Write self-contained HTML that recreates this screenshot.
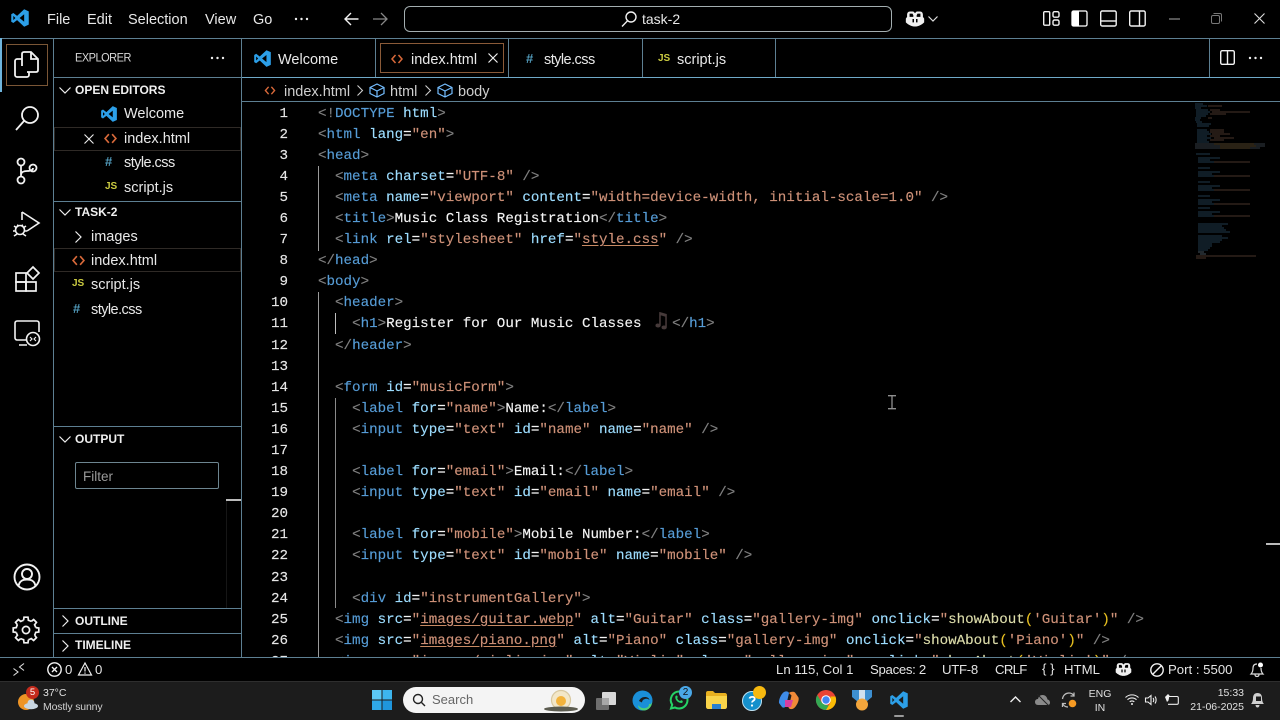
<!DOCTYPE html>
<html lang="en"><head><meta charset="utf-8"><title>index.html - task-2</title>
<style>
*{box-sizing:border-box}
html,body{margin:0;padding:0;width:1280px;height:720px;overflow:hidden;background:#000;color:#fff;font-family:"Liberation Sans",sans-serif}
.x{position:absolute;white-space:nowrap}
.u{font-size:14.5px;line-height:20px;color:#e8e8e8}
.n{letter-spacing:-.55px}
.b{font-size:12px;line-height:16px;font-weight:bold;color:#f0f0f0}
.l{position:absolute;background:#5d7f92}
svg{position:absolute;overflow:visible}
.w{fill:none;stroke:#f2f2f2;stroke-width:1.4}
#code,#nums{font-family:"Liberation Mono",monospace;font-size:14.2px;line-height:21.1px;white-space:pre;-webkit-text-stroke:.15px}
#code{position:absolute;left:318px;top:103.5px;width:880px;height:553.5px;overflow:hidden;color:#f4f4f4}
#nums{position:absolute;left:250px;top:103.5px;width:38px;height:553.5px;overflow:hidden;text-align:right;color:#e6e6e6}
.p{color:#808080}.t{color:#569cd6}.a{color:#9cdcfe}.s{color:#ce9178}.f{color:#dcdcaa}.y{color:#e8c020}
.k{text-decoration:underline;text-decoration-color:#c98a63;text-underline-offset:2px}
.st{font-size:13.2px;line-height:18px;color:#e4e4e4}
.tb{font-size:10.5px;line-height:14px;color:#e0e0e0}
</style></head><body>
<svg width="0" height="0" style="position:absolute"><defs>
<symbol id="vs" viewBox="0 0 24 24"><path fill="#2c9fe8" fill-rule="evenodd" d="M17 1.5 22.5 4v16L17 22.5 8.5 14.5 4 18 1.5 16.5v-9L4 6l4.500 3.500zM17 7.500 11.500 12 17 16.500zM4 9.500v5L6.500 12z"/></symbol>
<symbol id="code-i" viewBox="0 0 12 12"><path fill="none" stroke="#d9693a" stroke-width="1.5" d="M4.500 2 1 6l3.500 4M7.500 2 11 6l-3.500 4"/></symbol>
<symbol id="cop" viewBox="0 0 24 24"><path fill="#f0f0f0" d="M6 3h4l2 2 2-2h4c2.500 0 3.500 2 3.500 4v2.500l1.500 2V16c-3 3-7 5-11 5s-8-2-11-5v-4.500l1.500-2V7C2.500 5 3.500 3 6 3z"/><path fill="#000" d="M5.500 5.500h3.500l1 2v2H5.500zM14 7.500l1-2h3.500v4H14zM9 12h1.800v4H9zM13.200 12H15v4h-1.800z"/></symbol>
</defs></svg>

<!-- title bar -->
<svg style="left:10px;top:8px" width="20" height="20"><use href="#vs" width="20" height="20"/></svg>
<div class="x u" style="left:47px;top:10px">File</div>
<div class="x u" style="left:87px;top:10px">Edit</div>
<div class="x u" style="left:128px;top:10px">Selection</div>
<div class="x u" style="left:205px;top:10px">View</div>
<div class="x u" style="left:253px;top:10px">Go</div>
<svg style="left:294px;top:17px" width="16" height="4"><circle cx="2" cy="2" r="1.200" fill="#eee"/><circle cx="7.500" cy="2" r="1.200" fill="#eee"/><circle cx="13" cy="2" r="1.200" fill="#eee"/></svg>
<svg style="left:344px;top:12px" width="15" height="14"><path class="w" d="M14.500 7H1M7 1 1 7l6 6"/></svg>
<svg style="left:373px;top:12px" width="15" height="14"><path fill="none" stroke="#888" stroke-width="1.300" d="M0 7h13.500M8 1l6 6-6 6"/></svg>
<div class="x" style="left:404px;top:6px;width:488px;height:26px;border:1px solid #a3aeb0;border-radius:6px"></div>
<svg style="left:621px;top:11px" width="16" height="16"><circle class="w" cx="10" cy="6" r="5"/><path class="w" d="M6.500 9.800 1 15.500"/></svg>
<div class="x u" style="left:642px;top:9px;font-size:14px">task-2</div>
<svg style="left:905px;top:9px" width="20" height="20"><use href="#cop" width="20" height="20"/></svg>
<svg style="left:928px;top:16px" width="10" height="6"><path fill="none" stroke="#ddd" stroke-width="1.200" d="M.5.500 5 5 9.500.500"/></svg>
<svg style="left:1043px;top:10px" width="17" height="17"><rect class="w" x=".7" y="1.700" width="6" height="13.500" rx="1"/><rect class="w" x="10" y="1.700" width="6" height="5.500" rx="1.500"/><rect class="w" x="10" y="10" width="6" height="5.200" rx="1.500"/></svg>
<svg style="left:1071px;top:10px" width="17" height="17"><rect x="1" y="1" width="15" height="15" rx="1.500" fill="none" stroke="#fff" stroke-width="1.300"/><rect x="1" y="1" width="7" height="15" fill="#fff"/></svg>
<svg style="left:1100px;top:10px" width="17" height="17"><rect class="w" x=".7" y="1" width="15.500" height="15" rx="1.500"/><path class="w" d="M1 11h15"/></svg>
<svg style="left:1129px;top:10px" width="17" height="17"><rect class="w" x=".7" y="1" width="15.500" height="15" rx="1.500"/><path class="w" d="M10.500 1v15"/></svg>
<svg style="left:1169px;top:18px" width="11" height="2"><path stroke="#aaa" stroke-width="1" d="M0 1h11"/></svg>
<svg style="left:1211px;top:13px" width="11" height="11"><rect x=".5" y="2.500" width="8" height="8" rx="1.500" fill="none" stroke="#777"/><path fill="none" stroke="#777" d="M2.500 .5H9c1 0 1.500.5 1.500 1.500v6.500"/></svg>
<svg style="left:1254px;top:13px" width="11" height="11"><path fill="none" stroke="#ddd" stroke-width="1.100" d="M.5.500l10 10M10.500.500l-10 10"/></svg>

<!-- structure lines -->
<div class="l" style="left:0;top:38px;width:1280px;height:1px"></div>
<div class="l" style="left:53px;top:38px;width:1px;height:619px"></div>
<div class="l" style="left:241px;top:38px;width:1px;height:619px"></div>
<div class="l" style="left:53px;top:77px;width:188px;height:1px"></div>
<div class="l" style="left:242px;top:77px;width:1038px;height:1px;background:#6fa9c8"></div>
<div class="l" style="left:242px;top:101px;width:1038px;height:1px"></div>
<div class="l" style="left:375px;top:38px;width:1px;height:39px"></div>
<div class="l" style="left:508px;top:38px;width:1px;height:39px"></div>
<div class="l" style="left:642px;top:38px;width:1px;height:39px"></div>
<div class="l" style="left:775px;top:38px;width:1px;height:39px"></div>
<div class="l" style="left:1209px;top:38px;width:1px;height:39px"></div>

<!-- activity bar -->
<div class="x" style="left:0;top:38px;width:2px;height:54px;background:#6fb4dc"></div>
<div class="x" style="left:6px;top:44px;width:42px;height:42px;border:1px solid #7a5636"></div>
<svg style="left:14px;top:51px" width="26" height="28"><path class="w" style="stroke-width:1.800" d="M8 15V3c0-1 .5-2 2-2h7l7 7v11c0 1-.5 2-2 2h-9M17 1v7h7"/><path class="w" style="stroke-width:1.800" d="M8 8H3C2 8 1 9 1 10v14c0 1 1 2 2 2h10c1 0 2-1 2-2v-3"/></svg>
<svg style="left:15px;top:104px" width="26" height="28"><circle class="w" style="stroke-width:1.800" cx="15" cy="11" r="8"/><path class="w" style="stroke-width:1.800" d="M9 17 1 26"/></svg>
<svg style="left:16px;top:157px" width="22" height="28"><g class="w" style="stroke-width:1.800"><circle cx="5" cy="5" r="3.500"/><circle cx="5" cy="23" r="3.500"/><circle cx="17" cy="11" r="3.500"/><path d="M5 8.500v11M5 18c0-3 3-4 6-4 3 0 6-.5 6-3"/></g></svg>
<svg style="left:13px;top:211px" width="28" height="30"><g class="w" style="stroke-width:1.600"><path d="M9 1l17 11-12 8"/><path d="M9 1v8"/><circle cx="7" cy="19" r="4.500"/><path d="M1 15l3 2M13 15l-3 2M0 20h3M11 20h3M1 25l3-2M13 25l-3-2M4 14l2 1M10 14l-2 1"/></g></svg>
<svg style="left:15px;top:266px" width="26" height="26"><g class="w" style="stroke-width:1.700"><rect x="1" y="7" width="10" height="9"/><rect x="1" y="16" width="10" height="9"/><rect x="11" y="16" width="10" height="9"/><path d="M18 1l6 6-6 6-6-6z"/></g></svg>
<svg style="left:14px;top:320px" width="27" height="28"><g class="w" style="stroke-width:1.600"><path d="M12 20H3c-1 0-2-1-2-2V3c0-1 1-2 2-2h20c1 0 2 1 2 2v9M5 25h8"/><circle cx="19" cy="19" r="6.500" fill="#000"/><path d="M16 17l2 2-2 2M22 17l-2 2 2 2" stroke-width="1.100"/></g></svg>
<svg style="left:13px;top:563px" width="28" height="28"><g class="w" style="stroke-width:1.900"><circle cx="14" cy="14" r="12.500"/><circle cx="14" cy="11" r="5"/><path d="M5.500 23c1-5 4-6.500 8.500-6.500s7.500 1.500 8.500 6.500"/></g></svg>
<svg style="left:13px;top:617px" width="26" height="26"><g class="w" style="stroke-width:1.700" transform="translate(13 13)"><circle r="3.600"/>
<path d="M-2.400 -9.700L-2 -12.800L2 -12.800L2.400 -9.700A10 10 0 0 1 5.150 -8.570"/>
<path transform="rotate(45)" d="M-2.400 -9.700L-2 -12.800L2 -12.800L2.400 -9.700A10 10 0 0 1 5.150 -8.570"/>
<path transform="rotate(90)" d="M-2.400 -9.700L-2 -12.800L2 -12.800L2.400 -9.700A10 10 0 0 1 5.150 -8.570"/>
<path transform="rotate(135)" d="M-2.400 -9.700L-2 -12.800L2 -12.800L2.400 -9.700A10 10 0 0 1 5.150 -8.570"/>
<path transform="rotate(180)" d="M-2.400 -9.700L-2 -12.800L2 -12.800L2.400 -9.700A10 10 0 0 1 5.150 -8.570"/>
<path transform="rotate(225)" d="M-2.400 -9.700L-2 -12.800L2 -12.800L2.400 -9.700A10 10 0 0 1 5.150 -8.570"/>
<path transform="rotate(270)" d="M-2.400 -9.700L-2 -12.800L2 -12.800L2.400 -9.700A10 10 0 0 1 5.150 -8.570"/>
<path transform="rotate(315)" d="M-2.400 -9.700L-2 -12.800L2 -12.800L2.400 -9.700A10 10 0 0 1 5.150 -8.570"/>
</g></svg>

<!-- sidebar -->
<div class="x" style="left:75px;top:51px;font-size:11px;letter-spacing:-.5px;line-height:15px;color:#d8d8d8;transform-origin:0 50%;transform:scaleY(1.1)">EXPLORER</div>
<svg style="left:210px;top:56px" width="15" height="4"><circle cx="2" cy="2" r="1.200" fill="#eee"/><circle cx="7.500" cy="2" r="1.200" fill="#eee"/><circle cx="13" cy="2" r="1.200" fill="#eee"/></svg>
<svg style="left:59px;top:87px" width="12" height="7"><path fill="none" stroke="#eee" stroke-width="1.200" d="M.5.500 6 6 11.500.500"/></svg>
<div class="x b" style="left:75px;top:82px">OPEN EDITORS</div>
<svg style="left:100px;top:105px" width="18" height="18"><use href="#vs" width="18" height="18"/></svg>
<div class="x u" style="left:124px;top:104px">Welcome</div>
<div class="x" style="left:54px;top:127px;width:187px;height:24px;border:1px solid #2f2a26"></div>
<svg style="left:84px;top:134px" width="10" height="10"><path fill="none" stroke="#eee" stroke-width="1.100" d="M.5.500l9 9M9.500.500l-9 9"/></svg>
<svg style="left:104px;top:132px" width="13" height="13"><use href="#code-i" width="13" height="13"/></svg>
<div class="x u" style="left:124px;top:129px">index.html</div>
<div class="x" style="left:105px;top:153px;font-size:13px;line-height:18px;font-weight:bold;color:#519aba">#</div>
<div class="x u n" style="left:124px;top:153px">style.css</div>
<div class="x" style="left:105px;top:180px;font-size:10px;line-height:14px;font-weight:bold;color:#cbcb41">JS</div>
<div class="x u" style="left:124px;top:178px">script.js</div>
<div class="l" style="left:54px;top:201px;width:187px;height:1px"></div>
<svg style="left:59px;top:209px" width="12" height="7"><path fill="none" stroke="#eee" stroke-width="1.200" d="M.5.500 6 6 11.500.500"/></svg>
<div class="x b" style="left:75px;top:204px">TASK-2</div>
<svg style="left:75px;top:231px" width="7" height="12"><path fill="none" stroke="#eee" stroke-width="1.200" d="M.5.500 6 6 .5 11.500"/></svg>
<div class="x u" style="left:91px;top:227px">images</div>
<div class="x" style="left:54px;top:248px;width:187px;height:24px;border:1px solid #2f2a26"></div>
<svg style="left:72px;top:254px" width="13" height="13"><use href="#code-i" width="13" height="13"/></svg>
<div class="x u" style="left:91px;top:251px">index.html</div>
<div class="x" style="left:72px;top:277px;font-size:10px;line-height:14px;font-weight:bold;color:#cbcb41">JS</div>
<div class="x u" style="left:91px;top:275px">script.js</div>
<div class="x" style="left:73px;top:300px;font-size:13px;line-height:18px;font-weight:bold;color:#519aba">#</div>
<div class="x u n" style="left:91px;top:300px">style.css</div>
<div class="l" style="left:54px;top:426px;width:187px;height:1px"></div>
<svg style="left:59px;top:436px" width="12" height="7"><path fill="none" stroke="#eee" stroke-width="1.200" d="M.5.500 6 6 11.500.500"/></svg>
<div class="x b" style="left:75px;top:431px">OUTPUT</div>
<div class="x" style="left:75px;top:462px;width:144px;height:27px;border:1px solid #6d8590;border-radius:2px;padding-left:7px;font-size:13.500px;line-height:28px;color:#9a9a9a">Filter</div>
<div class="x" style="left:226px;top:499px;width:15px;height:2px;background:#bbb"></div>
<div class="x" style="left:226px;top:501px;width:1px;height:107px;background:#161616"></div>
<div class="l" style="left:54px;top:608px;width:187px;height:1px"></div>
<svg style="left:62px;top:615px" width="7" height="12"><path fill="none" stroke="#eee" stroke-width="1.200" d="M.5.500 6 6 .5 11.500"/></svg>
<div class="x b" style="left:75px;top:613px">OUTLINE</div>
<div class="l" style="left:54px;top:633px;width:187px;height:1px"></div>
<svg style="left:62px;top:640px" width="7" height="12"><path fill="none" stroke="#eee" stroke-width="1.200" d="M.5.500 6 6 .5 11.500"/></svg>
<div class="x b" style="left:75px;top:637px">TIMELINE</div>

<!-- tabs -->
<svg style="left:253px;top:49px" width="19" height="19"><use href="#vs" width="19" height="19"/></svg>
<div class="x u" style="left:278px;top:50px">Welcome</div>
<div class="x" style="left:380px;top:43px;width:124px;height:30px;border:1px solid #8a5a38"></div>
<svg style="left:391px;top:53px" width="12" height="12"><use href="#code-i" width="12" height="12"/></svg>
<div class="x u" style="left:411px;top:50px">index.html</div>
<svg style="left:488px;top:53px" width="10" height="10"><path fill="none" stroke="#eee" stroke-width="1.200" d="M.5.500l9 9M9.500.500l-9 9"/></svg>
<div class="x" style="left:526px;top:50px;font-size:13px;line-height:18px;font-weight:bold;color:#519aba">#</div>
<div class="x u n" style="left:544px;top:50px">style.css</div>
<div class="x" style="left:658px;top:52px;font-size:10px;line-height:14px;font-weight:bold;color:#cbcb41">JS</div>
<div class="x u" style="left:677px;top:50px">script.js</div>
<svg style="left:1220px;top:50px" width="15" height="15"><rect class="w" x=".7" y=".7" width="13.600" height="13.600" rx="1.500"/><path class="w" d="M7.500 1v13"/></svg>
<svg style="left:1248px;top:56px" width="15" height="4"><circle cx="2" cy="2" r="1.200" fill="#eee"/><circle cx="7.500" cy="2" r="1.200" fill="#eee"/><circle cx="13" cy="2" r="1.200" fill="#eee"/></svg>

<!-- breadcrumbs -->
<svg style="left:264px;top:85px" width="12" height="11"><use href="#code-i" width="12" height="11"/></svg>
<div class="x u" style="left:284px;top:82px;color:#cfcfcf">index.html</div>
<svg style="left:357px;top:85px" width="6" height="11"><path fill="none" stroke="#ccc" stroke-width="1.100" d="M.5.500 5.500 5.500.5 10.500"/></svg>
<svg style="left:369px;top:83px" width="16" height="15"><path fill="none" stroke="#75beff" stroke-width="1.200" d="M8 1l7 3.500v6L8 14l-7-3.500v-6zM1 4.500 8 8l7-3.500M8 8v6"/></svg>
<div class="x u" style="left:390px;top:82px;color:#cfcfcf">html</div>
<svg style="left:425px;top:85px" width="6" height="11"><path fill="none" stroke="#ccc" stroke-width="1.100" d="M.5.500 5.500 5.500.5 10.500"/></svg>
<svg style="left:437px;top:83px" width="16" height="15"><path fill="none" stroke="#75beff" stroke-width="1.200" d="M8 1l7 3.500v6L8 14l-7-3.500v-6zM1 4.500 8 8l7-3.500M8 8v6"/></svg>
<div class="x u" style="left:458px;top:82px;color:#cfcfcf">body</div>

<!-- editor -->
<div id="nums">1
2
3
4
5
6
7
8
9
10
11
12
13
14
15
16
17
18
19
20
21
22
23
24
25
26
27</div>
<div id="code"><span class="p">&lt;!</span><span class="t">DOCTYPE</span> <span class="a">html</span><span class="p">&gt;</span>
<span class="p">&lt;</span><span class="t">html</span> <span class="a">lang</span>=<span class="s">"en"</span><span class="p">&gt;</span>
<span class="p">&lt;</span><span class="t">head</span><span class="p">&gt;</span>
  <span class="p">&lt;</span><span class="t">meta</span> <span class="a">charset</span>=<span class="s">"UTF-8"</span> <span class="p">/&gt;</span>
  <span class="p">&lt;</span><span class="t">meta</span> <span class="a">name</span>=<span class="s">"viewport"</span> <span class="a">content</span>=<span class="s">"width=device-width, initial-scale=1.0"</span> <span class="p">/&gt;</span>
  <span class="p">&lt;</span><span class="t">title</span><span class="p">&gt;</span>Music Class Registration<span class="p">&lt;/</span><span class="t">title</span><span class="p">&gt;</span>
  <span class="p">&lt;</span><span class="t">link</span> <span class="a">rel</span>=<span class="s">"stylesheet"</span> <span class="a">href</span>=<span class="s">"<span class="k">style.css</span>"</span> <span class="p">/&gt;</span>
<span class="p">&lt;/</span><span class="t">head</span><span class="p">&gt;</span>
<span class="p">&lt;</span><span class="t">body</span><span class="p">&gt;</span>
  <span class="p">&lt;</span><span class="t">header</span><span class="p">&gt;</span>
    <span class="p">&lt;</span><span class="t">h1</span><span class="p">&gt;</span>Register for Our Music Classes <span style="color:#463a3a;font-family:'DejaVu Sans',sans-serif;display:inline-block;width:22px;padding-left:2px;font-size:20px;font-weight:bold;line-height:0;vertical-align:baseline;-webkit-text-stroke:.8px #463a3a">♫</span><span class="p">&lt;/</span><span class="t">h1</span><span class="p">&gt;</span>
  <span class="p">&lt;/</span><span class="t">header</span><span class="p">&gt;</span>

  <span class="p">&lt;</span><span class="t">form</span> <span class="a">id</span>=<span class="s">"musicForm"</span><span class="p">&gt;</span>
    <span class="p">&lt;</span><span class="t">label</span> <span class="a">for</span>=<span class="s">"name"</span><span class="p">&gt;</span>Name:<span class="p">&lt;/</span><span class="t">label</span><span class="p">&gt;</span>
    <span class="p">&lt;</span><span class="t">input</span> <span class="a">type</span>=<span class="s">"text"</span> <span class="a">id</span>=<span class="s">"name"</span> <span class="a">name</span>=<span class="s">"name"</span> <span class="p">/&gt;</span>

    <span class="p">&lt;</span><span class="t">label</span> <span class="a">for</span>=<span class="s">"email"</span><span class="p">&gt;</span>Email:<span class="p">&lt;/</span><span class="t">label</span><span class="p">&gt;</span>
    <span class="p">&lt;</span><span class="t">input</span> <span class="a">type</span>=<span class="s">"text"</span> <span class="a">id</span>=<span class="s">"email"</span> <span class="a">name</span>=<span class="s">"email"</span> <span class="p">/&gt;</span>

    <span class="p">&lt;</span><span class="t">label</span> <span class="a">for</span>=<span class="s">"mobile"</span><span class="p">&gt;</span>Mobile Number:<span class="p">&lt;/</span><span class="t">label</span><span class="p">&gt;</span>
    <span class="p">&lt;</span><span class="t">input</span> <span class="a">type</span>=<span class="s">"text"</span> <span class="a">id</span>=<span class="s">"mobile"</span> <span class="a">name</span>=<span class="s">"mobile"</span> <span class="p">/&gt;</span>

    <span class="p">&lt;</span><span class="t">div</span> <span class="a">id</span>=<span class="s">"instrumentGallery"</span><span class="p">&gt;</span>
  <span class="p">&lt;</span><span class="t">img</span> <span class="a">src</span>=<span class="s">"<span class="k">images/guitar.webp</span>"</span> <span class="a">alt</span>=<span class="s">"Guitar"</span> <span class="a">class</span>=<span class="s">"gallery-img"</span> <span class="a">onclick</span>=<span class="s">"</span><span class="f">showAbout</span><span class="y">(</span><span class="s">'Guitar'</span><span class="y">)</span><span class="s">"</span> <span class="p">/&gt;</span>
  <span class="p">&lt;</span><span class="t">img</span> <span class="a">src</span>=<span class="s">"<span class="k">images/piano.png</span>"</span> <span class="a">alt</span>=<span class="s">"Piano"</span> <span class="a">class</span>=<span class="s">"gallery-img"</span> <span class="a">onclick</span>=<span class="s">"</span><span class="f">showAbout</span><span class="y">(</span><span class="s">'Piano'</span><span class="y">)</span><span class="s">"</span> <span class="p">/&gt;</span>
  <span class="p">&lt;</span><span class="t">img</span> <span class="a">src</span>=<span class="s">"<span class="k">images/violin.jpg</span>"</span> <span class="a">alt</span>=<span class="s">"Violin"</span> <span class="a">class</span>=<span class="s">"gallery-img"</span> <span class="a">onclick</span>=<span class="s">"</span><span class="f">showAbout</span><span class="y">(</span><span class="s">'Violin'</span><span class="y">)</span><span class="s">"</span> <span class="p">/&gt;</span></div>
<!-- indent guides -->
<div class="x" style="left:318px;top:166px;width:1px;height:85px;background:#9a9a9a"></div>
<div class="x" style="left:318px;top:292px;width:1px;height:365px;background:#9a9a9a"></div>
<div class="x" style="left:335px;top:313px;width:1px;height:21px;background:#bdbdbd"></div>
<div class="x" style="left:335px;top:398px;width:1px;height:210px;background:#8a8a8a"></div>
<!-- i-beam cursor -->
<svg style="left:887px;top:395px" width="10" height="15"><path fill="none" stroke="#8f8f8f" stroke-width="1.300" d="M1 .7h8M5 .7v13M1 13.700h8"/></svg>
<!-- minimap -->
<svg style="left:1190px;top:102px" width="90" height="160"><g stroke-width="1" fill="none" opacity=".55">
<path stroke="#3a6a8c" d="M5 2h8M5 4h12M5 6h6M6 8h12M6 10h14M6 12h12M6 14h10M5 16h6M5 18h5M6 20h6M7 22h14M7 24h12M7 28h10M7 30h12M7 32h14M7 34h10M7 36h14M7 38h10M7 40h12"/>
<path stroke="#86604e" d="M18 4h14M20 8h10M22 10h38M20 12h16M18 16h4M20 28h14M20 30h14M22 32h18M20 34h10M24 36h20M20 38h14"/>
<path stroke="#5f6f7c" d="M5 42h70M5 44h70M5 46h65"/><path stroke="#9a7a4e" d="M24 42h40M30 44h36M30 46h30"/>
<path stroke="#3a6a8c" d="M6 52h14M8 56h22M8 58h12M8 60h50M8 66h12M8 70h22M8 72h14M8 74h50M8 80h12M8 84h22M8 86h14M8 88h50M8 94h12M8 98h22M8 100h14M8 102h50M8 106h12M8 110h22M8 112h14M8 114h50"/>
<path stroke="#86604e" d="M24 60h36M24 74h36M24 88h36M24 102h36M24 114h36"/>
<path stroke="#3a6a8c" d="M8 122h30M8 124h24M8 126h26M8 128h28M8 130h32M8 134h24M8 136h30M8 138h24M8 140h22M8 142h14M8 144h14M8 146h12M8 148h10"/>
<path stroke="#7c96a8" d="M8 150h6M10 152h6"/>
<path stroke="#86604e" d="M6 154h60M6 156h10"/></g></svg>
<div class="x" style="left:1266px;top:543px;width:14px;height:1.500px;background:#bbb"></div>

<!-- status bar -->
<div class="l" style="left:0;top:657px;width:1280px;height:1px"></div>
<svg style="left:13px;top:663px" width="12" height="13"><path fill="none" stroke="#ddd" stroke-width="1.100" d="M.5 5.500 5 9 .5 12.500M11 .5 6.500 4 11 7.500"/></svg>
<svg style="left:47px;top:662px" width="15" height="15"><circle class="w" cx="7.500" cy="7.500" r="6.700"/><path class="w" d="M5 5l5 5M10 5l-5 5"/></svg>
<div class="x st" style="left:65px;top:661px">0</div>
<svg style="left:78px;top:662px" width="14" height="14"><path fill="none" stroke="#f0f0f0" stroke-width="1.200" d="M7 1 13.500 13H.5zM7 5v4.500M7 10.500v1.300"/></svg>
<div class="x st" style="left:95px;top:661px">0</div>
<div class="x st" style="left:776px;top:661px">Ln 115, Col 1</div>
<div class="x st" style="left:870px;top:661px;letter-spacing:-.3px">Spaces: 2</div>
<div class="x st" style="left:942px;top:661px;letter-spacing:-.3px">UTF-8</div>
<div class="x st" style="left:995px;top:661px;letter-spacing:-.7px">CRLF</div>
<div class="x st" style="left:1042px;top:660px">{ }</div>
<div class="x st" style="left:1064px;top:661px">HTML</div>
<svg style="left:1115px;top:661px" width="17" height="17"><use href="#cop" width="17" height="17"/></svg>
<svg style="left:1150px;top:663px" width="14" height="14"><circle class="w" cx="7" cy="7" r="6.200"/><path class="w" d="M11.500 2.500l-9 9"/></svg>
<div class="x st" style="left:1168px;top:661px">Port : 5500</div>
<svg style="left:1250px;top:662px" width="14" height="15"><path fill="none" stroke="#ddd" stroke-width="1.200" d="M7 2C4 2 3 4 3 6c0 3-1 5-2 6h12c-1-1-2-3-2-6M5 12.500c0 1.500 1 2 2 2s2-.5 2-2"/><circle cx="10.500" cy="3" r="2.500" fill="#fff"/></svg>

<!-- taskbar -->
<div class="x" style="left:0;top:681px;width:1280px;height:39px;background:#1c1c1c;border-top:1px solid #2e2e2e"></div>
<svg style="left:17px;top:688px" width="24" height="24"><circle cx="9" cy="14" r="8" fill="#ee9425"/><ellipse cx="14" cy="18" rx="7" ry="3.200" fill="#c8d6e2"/><circle cx="14" cy="15" r="3.500" fill="#c8d6e2"/></svg>
<div class="x" style="left:26px;top:686px;width:13px;height:13px;border-radius:50%;background:#c42b1c;font-size:9.500px;line-height:13px;text-align:center;color:#fff">5</div>
<div class="x tb" style="left:43px;top:686px">37°C</div>
<div class="x tb" style="left:43px;top:700px;color:#cfcfcf;letter-spacing:-.15px">Mostly sunny</div>
<svg style="left:372px;top:690px" width="20" height="20"><path fill="#5cc8f5" d="M0 0h9.500v9.500H0z"/><path fill="#3db5ee" d="M10.500 0H20v9.500h-9.500z"/><path fill="#2fa8e8" d="M0 10.500h9.500V20H0z"/><path fill="#1f96dc" d="M10.500 10.500H20V20h-9.500z"/></svg>
<div class="x" style="left:403px;top:687px;width:182px;height:26px;border-radius:13px;background:#f4f4f4"></div>
<svg style="left:412px;top:693px" width="14" height="14"><circle cx="6" cy="6" r="4.500" fill="none" stroke="#222" stroke-width="1.400"/><path stroke="#222" stroke-width="1.400" d="M9.500 9.500l3.500 3.500"/></svg>
<div class="x" style="left:432px;top:692px;font-size:13px;line-height:16px;color:#666">Search</div>
<svg style="left:543px;top:689px" width="40" height="23"><circle cx="18" cy="11" r="9.500" fill="#f3e7c8" stroke="#d8c8a0" stroke-width="1.200"/><circle cx="18" cy="12" r="5" fill="#f3b33c"/><ellipse cx="18" cy="20" rx="17" ry="2.500" fill="#5c5c50"/></svg>
<svg style="left:596px;top:691px" width="20" height="19"><rect x="0" y="7" width="13" height="12" rx="1" fill="#6e6e6e"/><rect x="6" y="1" width="14" height="13" rx="1" fill="#d8d8d8"/><rect x="6" y="7" width="7" height="7" fill="#a8a8a8"/></svg>
<svg style="left:632px;top:690px" width="21" height="21"><circle cx="10.500" cy="10.500" r="10" fill="#1a8fd8"/><path fill="#4ccf7a" d="M20 12c0 5-4 8.500-8 8.500-4 0-6-3-6-5.500 2 3 6 4 9 2.500 1.500-.8 2-2 2-3.500h2z"/><path fill="#1c1c1c" d="M7 11c1-2.500 3-4 6-4 2.500 0 4 1.200 4.500 3-1-1-2.500-1.500-4.500-1-2 .5-3 2-3 3.500z"/></svg>
<svg style="left:669px;top:689px" width="24" height="22"><path fill="none" stroke="#25d366" stroke-width="2" d="M10 2.500a8.500 8.500 0 0 1 0 17c-1.500 0-3-.4-4-1l-4 1 1.200-3.800A8.500 8.500 0 0 1 10 2.500z"/><path fill="#25d366" d="M6.500 7c1-1 2-.5 2.200 1l-.5 1.200c.5 1.300 1.500 2.300 2.800 2.800l1.200-.8c1.300.3 2 1 1.300 2.300-2 1.800-8.500-2-7-6.500z"/></svg>
<div class="x" style="left:679px;top:686px;width:13px;height:13px;border-radius:50%;background:#4aa8e8;font-size:10px;line-height:13px;text-align:center;color:#111">2</div>
<svg style="left:706px;top:691px" width="21" height="18"><path fill="#e8b020" d="M0 2c0-1 .5-2 2-2h5l2 2h10c1 0 2 1 2 2v2H0z"/><path fill="#f9d44a" d="M0 5h21v11c0 1-1 2-2 2H2c-1 0-2-1-2-2z"/><rect x="6" y="13" width="9" height="5" fill="#2a7fd0"/></svg>
<svg style="left:742px;top:690px" width="20" height="21"><circle cx="10" cy="11" r="9.500" fill="#1590cc" stroke="#bfe4f5" stroke-width="1"/><path fill="none" stroke="#fff" stroke-width="1.800" d="M7.500 8.500c.5-2 5-2.500 5.200.3.100 2-2.700 1.900-2.700 3.700"/><circle cx="10" cy="15.500" r="1.100" fill="#fff"/></svg>
<div class="x" style="left:753px;top:686px;width:13px;height:13px;border-radius:50%;background:#f7b90f"></div>
<svg style="left:779px;top:691px" width="20" height="19"><path fill="#3f8ce8" d="M5 1c2-1 4-1 5 1l-3 13c-1 2-3 2-4 1L0 12C-.5 9 2 3 5 1z"/><path fill="#f08a38" d="M10 2c1-1 4-2 6-.5l3.500 5c1 3-2 9-5 11-2 1-4 1-5-1l3-12z"/><path fill="#d93ea0" d="M6 9h8l-2 7H6z"/></svg>
<svg style="left:816px;top:690px" width="20" height="20"><circle cx="10" cy="10" r="10" fill="#ea4335"/><path fill="#34a853" d="M10 20A10 10 0 0 1 1.300 5L6 13l4 2 3 .5z"/><path fill="#fbbc05" d="M19.500 6.500A10 10 0 0 1 10 20l4.500-7.500V6.500z"/><circle cx="10" cy="10" r="4.800" fill="#fff"/><circle cx="10" cy="10" r="3.700" fill="#4285f4"/></svg>
<svg style="left:852px;top:690px" width="20" height="21"><path fill="#3d8fd0" d="M0 0h20v7l-6 5H6L0 7z"/><path fill="#cfe0ee" d="M7 0h6v11H7z"/><circle cx="10" cy="14.500" r="6" fill="#f2a53c"/></svg>
<svg style="left:889px;top:690px" width="20" height="20"><use href="#vs" width="20" height="20"/></svg>
<div class="x" style="left:894px;top:715px;width:10px;height:2px;background:#9a9a9a;border-radius:1px"></div>
<svg style="left:1010px;top:696px" width="11" height="7"><path fill="none" stroke="#eee" stroke-width="1.400" d="M.5 6 5.500 1l5 5"/></svg>
<svg style="left:1035px;top:693px" width="15" height="14"><path fill="#8a8a8a" d="M3 12C1 12 0 10.500 0 9c0-2 1.500-3 3-3 .5-2.500 2-4 4.500-4 3 0 4.500 2 5 4.500 1.500.3 2.500 1.500 2.500 3 0 2-1 2.500-2.500 2.500z"/><path stroke="#222" d="M2 1l12 12"/></svg>
<svg style="left:1061px;top:691px" width="17" height="19"><path fill="none" stroke="#bdbdbd" stroke-width="1.300" d="M1.500 8C2 4 5 2 8 2c2 0 4 1 5 3M13 1.500V5H9.500M1.500 12c.7 2.500 3 4 5.500 4M1.500 16v-3.500H5"/><circle cx="11.500" cy="12.500" r="3.800" fill="#f59a23"/></svg>
<div class="x tb" style="left:1082px;top:687px;width:36px;text-align:center">ENG</div>
<div class="x tb" style="left:1082px;top:701px;width:36px;text-align:center">IN</div>
<svg style="left:1125px;top:694px" width="14" height="11"><path fill="none" stroke="#eee" stroke-width="1.100" d="M.5 3.500c3.500-3.500 9.500-3.500 13 0M2.500 5.700c2.500-2.400 6.500-2.400 9 0M4.700 7.800c1.300-1.200 3.300-1.200 4.600 0"/><circle cx="7" cy="10" r="1" fill="#eee"/></svg>
<svg style="left:1145px;top:694px" width="12" height="12"><path fill="none" stroke="#eee" stroke-width="1.100" d="M.5 4v4h2.500l3 2.500v-9L3 4zM8 4c1 1 1 3 0 4M10 2.500c1.500 2 1.500 5 0 7"/></svg>
<svg style="left:1165px;top:693px" width="14" height="13"><path fill="#eee" d="M0 4l3-3 1.500 1.500-1 5L2 9z"/><path fill="none" stroke="#eee" stroke-width="1.100" d="M3 3.500h9c.8 0 1.300.5 1.300 1.300V10c0 .8-.5 1.300-1.300 1.300H3"/></svg>
<div class="x tb" style="left:1180px;top:686px;width:64px;text-align:right">15:33</div>
<div class="x tb" style="left:1180px;top:700px;width:64px;text-align:right">21-06-2025</div>
<svg style="left:1251px;top:692px" width="13" height="16"><path fill="#cfcfcf" d="M6.500 1C3.500 1 2 3 2 6c0 3-1 5-2 6h13c-1-1-2-3-2-6 0-3-1.500-5-4.500-5z"/><path fill="#cfcfcf" d="M4.500 13h4c0 1.500-1 2.500-2 2.500s-2-1-2-2.500z"/><rect x="5" y="4.500" width="5" height="4.500" fill="#1c1c1c"/></svg>
</body></html>
